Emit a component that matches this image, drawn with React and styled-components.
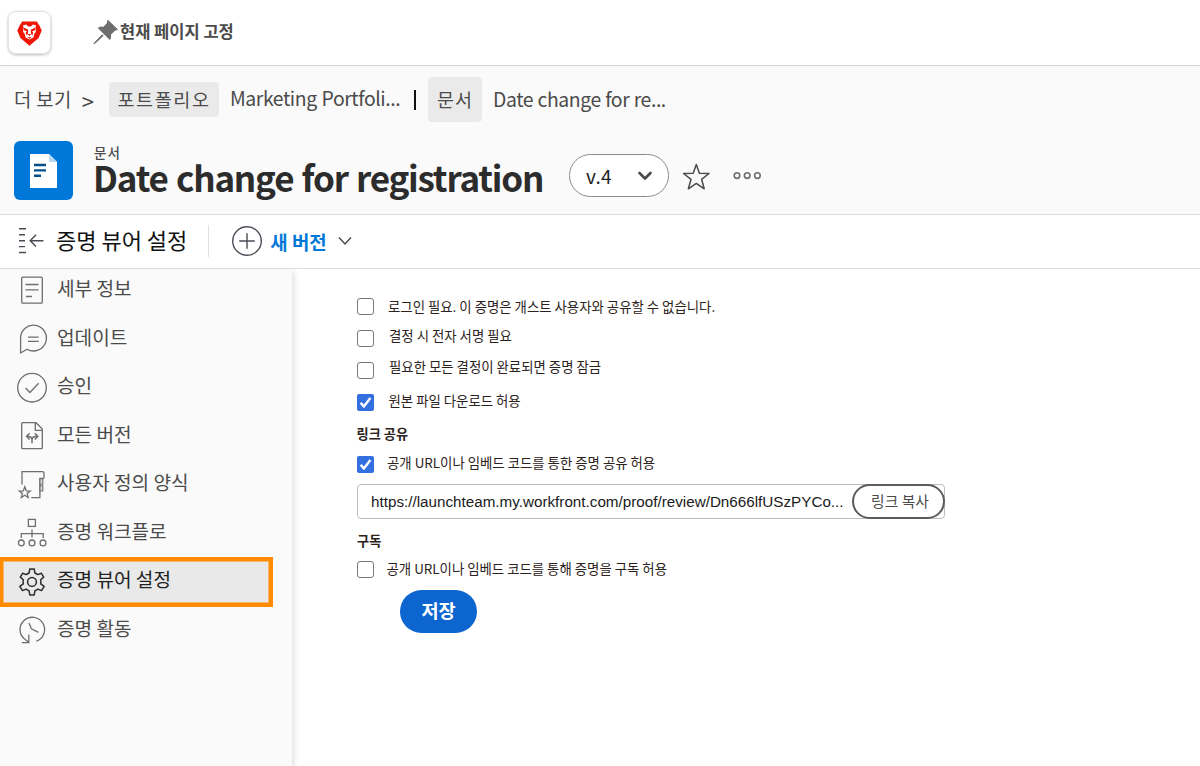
import React from 'react';
import styled, { createGlobalStyle } from 'styled-components';

const Global = createGlobalStyle`
  * { box-sizing: border-box; }
  html, body { margin: 0; padding: 0; }
  body {
    background: #fff;
    font-family: "Noto Sans CJK KR", sans-serif;
    overflow: hidden;
  }
`;

const Page = styled.div`
  width: 1200px;
  height: 766px;
  display: flex;
  flex-direction: column;
  overflow: hidden;
`;

const Text = styled.span`
  display: block;
  white-space: nowrap;
  font-size: ${(p) => p.$size}px;
  font-weight: ${(p) => p.$weight || 400};
  letter-spacing: ${(p) => p.$track || 0}px;
  word-spacing: ${(p) => p.$words || 0}px;
  color: ${(p) => p.$color || '#4b4b4b'};
  line-height: ${(p) => p.$line || 24}px;
  margin-top: ${(p) => p.$top || 0}px;
  margin-left: ${(p) => p.$left || 0}px;
`;

const Icon = styled.svg`
  display: block;
  flex: none;
  fill: none;
  stroke: ${(p) => p.$color || '#6e6e6e'};
  stroke-width: ${(p) => p.$stroke || 1.3};
  margin-left: ${(p) => p.$left || 0}px;
  margin-top: ${(p) => p.$top || 0}px;
`;

const TopBar = styled.header`
  height: 66px;
  flex: none;
  display: flex;
  align-items: center;
  padding-left: 8px;
  border-bottom: 1px solid #d3d3d3;
`;

const LogoTile = styled.div`
  width: 43px;
  height: 43px;
  margin: 0 1px 0 0;
  border-radius: 8px;
  border: 1px solid #e4e4e4;
  box-shadow: 0 1px 3px rgba(0, 0, 0, 0.28);
  display: flex;
  align-items: center;
  justify-content: center;
  padding-top: 1px;
`;

const Head = styled.section`
  height: 149px;
  flex: none;
  background: #fafafa;
  border-bottom: 1px solid #dcdcdc;
`;

const Crumbs = styled.nav`
  display: flex;
  align-items: center;
  height: 67px;
  padding-left: 14px;
`;

const Chip = styled.span`
  display: flex;
  align-items: center;
  justify-content: center;
  width: ${(p) => p.$w}px;
  height: ${(p) => p.$h}px;
  border-radius: 4px;
  background: #eaeaea;
  margin-left: ${(p) => p.$left}px;
`;

const Pipe = styled.span`
  width: 2px;
  height: 20px;
  background: #111;
`;

const Slot = styled.div`
  width: ${(p) => p.$w}px;
  flex: none;
  display: flex;
  align-items: center;
`;

const TitleRow = styled.div`
  display: flex;
  padding: 8px 0 0 14px;
`;

const DocTile = styled.div`
  width: 59px;
  height: 59px;
  border-radius: 6px;
  background: #0078d9;
  display: flex;
  align-items: center;
  justify-content: center;
`;

const TitleBlock = styled.div`
  width: 475px;
  margin-left: 21px;
`;

const VersionSelect = styled.button`
  width: 100px;
  height: 43px;
  margin: 13px 0 0;
  padding: 0 15px 0 16px;
  border: 1px solid #8b8b8b;
  border-radius: 22px;
  background: #fff;
  display: flex;
  align-items: center;
  justify-content: space-between;
  font-family: inherit;
`;

const Toolbar = styled.div`
  height: 54px;
  flex: none;
  display: flex;
  align-items: center;
  border-bottom: 1px solid #dcdcdc;
  padding-left: 18px;
`;

const Divider = styled.span`
  width: 1px;
  height: 32px;
  margin-top: -1px;
  background: #e1e1e1;
`;

const Body = styled.div`
  flex: 1;
  display: flex;
  min-height: 0;
`;

const Sidebar = styled.aside`
  width: 292px;
  flex: none;
  background: #fafafa;
  box-shadow: 2px 3px 6px rgba(40, 60, 80, 0.16);
  clip-path: inset(0 -12px 0 0);
`;

const NavList = styled.ul`
  list-style: none;
  margin: -2.5px 0 0;
  padding: 0;
`;

const NavItem = styled.li`
  display: flex;
  align-items: center;
  height: 48.5px;
  padding-left: 16px;
`;

const ActiveItem = styled(NavItem)`
  height: 49.5px;
  width: 272.5px;
  margin: -0.5px 0;
  padding-left: 13px;
  border: 4px solid #ff8b00;
  border-left-width: 3px;
  background: #e9e9e9;
  box-shadow: inset 0 0 0 1px #f6b768;
`;

const Main = styled.main`
  padding: 21px 0 0 65px;
  display: flex;
  flex-direction: column;
  align-items: flex-start;
`;

const CheckRow = styled.label`
  display: flex;
  align-items: center;
  height: 32px;
  margin-top: ${(p) => p.$top || 0}px;
`;

const Box = styled.span`
  width: 17px;
  height: 17px;
  flex: none;
  border-radius: ${(p) => (p.$on ? 2 : 3)}px;
  border: ${(p) => (p.$on ? '0' : '1px solid #7a7a7a')};
  background: ${(p) => (p.$on ? '#346fe0' : '#fff')};
  display: flex;
  align-items: center;
  justify-content: center;
`;

const UrlField = styled.div`
  width: 588px;
  height: 35px;
  margin-top: 4px;
  border: 1px solid #bdbdbd;
  border-radius: 4px;
  display: flex;
  align-items: center;
  justify-content: space-between;
  padding-left: 13px;
`;

const Url = styled.span`
  font-family: "Liberation Sans", Arial, sans-serif;
  font-size: 15.23px;
  line-height: 20px;
  color: #1a1a1a;
  white-space: nowrap;
`;

const CopyButton = styled.button`
  width: 93px;
  height: 35px;
  flex: none;
  margin: 0 -1px;
  padding: 0 0 0 3px;
  border: 2px solid #5c5c5c;
  border-radius: 18px;
  background: #fff;
  font-family: inherit;
  display: flex;
  align-items: center;
  justify-content: center;
`;

const SaveButton = styled.button`
  width: 77px;
  height: 43px;
  margin: 5px 0 0 43px;
  padding: 0;
  border: 0;
  border-radius: 22px;
  background: #0d66d0;
  font-family: inherit;
  display: flex;
  align-items: center;
  justify-content: center;
`;

const NavIcon = ({ children, color }) => (
  <Icon width="32" height="32" viewBox="0 0 32 32" $color={color}>{children}</Icon>
);

const icons = {
  details: (
    <>
      <rect x="5.7" y="2.2" width="20.6" height="26" rx="1.2" />
      <path d="M9.5 9.5H22.5M9.5 14.8H22.5M10 21.5H16" />
    </>
  ),
  updates: (
    <>
      <path d="M4.6 30V15.2A12.9 12.9 0 1 1 11 26.2Z" strokeLinejoin="round" />
      <path d="M12 14.2H22.7M12 18.3H22.7" />
    </>
  ),
  approvals: (
    <>
      <circle cx="16" cy="15.7" r="14.3" />
      <path d="M9.6 16L13.9 20.5L22.6 11.3" />
    </>
  ),
  versions: (
    <>
      <path d="M20 2.7H6.7Q5.7 2.7 5.7 3.7V27.7Q5.7 28.7 6.7 28.7H25.3Q26.3 28.7 26.3 27.7V9Z" strokeLinejoin="round" />
      <path d="M19.3 3V10.4H26" />
      <path d="M16 23.3V19.8Q16 16.3 11 16.3M16 19.8Q16 16.3 21.3 16.3M13.6 13.2L10.6 16.3L13.6 19.4M18.8 13.2L21.8 16.3L18.8 19.4" strokeWidth="1.5" />
    </>
  ),
  forms: (
    <>
      <path d="M6 15.5V2.7H26.5Q28 2.7 28 4.2V8.6Q28 9.5 26.6 9.5H23.9V28.6H15.3" />
      <path d="M24 9.8H26.8V15.2H24ZM24 16.8H26.8V22H24Z" fill="#dcdcdc" strokeWidth="1.1" />
      <path d="M8.8 17.8L10.3 21.8L14.3 22L11.2 24.6L12.2 28.6L8.8 26.3L5.3 28.6L6.4 24.6L3.3 22L7.3 21.8Z" />
    </>
  ),
  workflow: (
    <>
      <rect x="12.4" y="2.4" width="7" height="7" />
      <path d="M16 12.4V20.6M5.3 21V16.6H27.2V21" />
      <circle cx="5.3" cy="25.9" r="2.9" />
      <circle cx="16" cy="25.9" r="2.9" />
      <circle cx="27" cy="25.9" r="2.9" />
    </>
  ),
  settings: (
    <>
      <path d="M13.8 3.1H18.2L18.9 7A9.5 9.5 0 0 1 21.7 8.6L25.4 7.3L27.7 11.1L24.7 13.7A9.5 9.5 0 0 1 24.7 17.9L28.2 20.3L25.5 24.6L21.9 23.1A9.5 9.5 0 0 1 18.9 24.8L18.2 28.9H13.8L13.1 24.8A9.5 9.5 0 0 1 10.1 23.1L6.5 24.6L3.8 20.3L7.3 17.9A9.5 9.5 0 0 1 7.3 13.7L4.3 11.1L6.6 7.3L10.3 8.6A9.5 9.5 0 0 1 13.1 7Z" strokeLinejoin="round" strokeWidth="1.5" />
      <circle cx="16" cy="15.9" r="4.4" strokeWidth="1.5" />
    </>
  ),
  activity: (
    <path d="M20.3 27.2A12.3 12.3 0 1 0 9.5 25.8L12.5 28M5.8 28.6H12.8V20.5M13 9L15.4 14.7L22.4 18.4" />
  ),
};

const navItems = [
  ['details', '세부 정보'],
  ['updates', '업데이트'],
  ['approvals', '승인'],
  ['versions', '모든 버전'],
  ['forms', '사용자 정의 양식'],
  ['workflow', '증명 워크플로'],
  ['settings', '증명 뷰어 설정'],
  ['activity', '증명 활동'],
];

const Tick = () => (
  <Icon width="13" height="13" viewBox="0 0 13 13" $color="#fff" $stroke={2.4}>
    <path d="M1.6 6.9L4.9 10.4L11.4 2" />
  </Icon>
);

const Check = ({ on, left = 14, dy = 0, top, track, children }) => (
  <CheckRow $top={top}>
    <Box $on={on}>{on && <Tick />}</Box>
    <Text $size={13.4} $color="#2b2220" $left={left} $top={dy} $track={track}>{children}</Text>
  </CheckRow>
);

export default function App() {
  return (
    <Page>
      <Global />
      <TopBar>
        <LogoTile>
          <svg width="25" height="25" viewBox="0 0 25 25">
            <path d="M5.2 0.4H19.8L22.2 4.2L24.7 9.6L21.6 17L12.5 24.8L3.4 17L0.3 9.6L2.8 4.2Z" fill="#f01405" />
            <path d="M5.8 4.4L9 3.6L11.4 5.4H13.6L16 3.6L19.2 4.4L18.4 6.6L18.9 11L17.4 12.6L16.4 16.4L12.5 18.6L8.6 16.4L7.6 12.6L6.1 11L6.6 6.6Z" fill="#fff" />
            <path d="M6.6 6.4L11.2 8.8L11 12.4L9.6 14.4L8.8 11.6L10 10.6L7.2 9.2ZM18.4 6.4L13.8 8.8L14 12.4L15.4 14.4L16.2 11.6L15 10.6L17.8 9.2ZM10.7 13H14.3L12.5 15ZM10.2 16.6L12.5 15.9L14.8 16.6L12.5 17.4Z" fill="#f01405" />
          </svg>
        </LogoTile>
        <Icon width="25" height="25" viewBox="0 0 26 26" $left={41} $top={-1} $stroke={0}>
          <path d="M15.5 0.6L24.9 9.8L22.4 10.6L17.8 15.2C18.6 17.4 18.1 18.9 17.4 19.9L5.9 8.5C7.4 7.3 9.5 7.4 10.8 8L15 3.6Z" fill="#6e6e6e" />
          <path d="M9.5 15.3L10.6 16.5L1.5 24.8L0.9 24.2Z" fill="#6e6e6e" stroke="#6e6e6e" strokeWidth="0.8" />
        </Icon>
        <Text $size={16.5} $weight={700} $top={-3} $left={2}>현재 페이지 고정</Text>
      </TopBar>

      <Head>
        <Crumbs>
          <Slot $w={95}>
            <Text $size={18.8} $top={-2} $track={0.4}>더 보기</Text>
            <Text $size={22} $top={0} $left={10}>&gt;</Text>
          </Slot>
          <Chip $w={110} $h={35} $left={0}>
            <Text $size={18.5} $track={1.6} $top={-2}>포트폴리오</Text>
          </Chip>
          <Slot $w={195}>
            <Text $size={19.4} $left={11} $top={-4} $track={-0.42} $words={1}>Marketing Portfoli...</Text>
          </Slot>
          <Pipe />
          <Chip $w={54} $h={45} $left={12}>
            <Text $size={18.5} $track={1} $top={-1}>문서</Text>
          </Chip>
          <Text $size={19.4} $left={11} $top={-2} $track={-0.42} $words={0.5}>Date change for re...</Text>
        </Crumbs>
        <TitleRow>
          <DocTile>
            <svg width="29" height="36" viewBox="0 0 29 36">
              <path d="M1 1H20L28 9V35H1Z" fill="#fff" />
              <path d="M20 1L28 9H20Z" fill="#b5d8f6" />
              <path d="M5 12H17M5 17.4H17M5 22.8H12" stroke="#054f8d" strokeWidth="2.4" fill="none" />
            </svg>
          </DocTile>
          <TitleBlock>
            <Text $size={13.5} $weight={500} $line={18} $top={2} $track={1}>문서</Text>
            <Text $size={35} $weight={700} $color="#2c2c2c" $line={32} $left={-1} $track={-1.19} $words={1.5}>Date change for registration</Text>
          </TitleBlock>
          <VersionSelect>
            <Text $size={19} $color="#222" $track={0.3}>v.4</Text>
            <Icon width="16" height="10" viewBox="0 0 16 10" $color="#4b4b4b" $stroke={2.6}>
              <path d="M2.5 2L8 7.5L13.5 2" strokeLinecap="round" strokeLinejoin="round" />
            </Icon>
          </VersionSelect>
          <Icon width="28" height="28" viewBox="0 0 28 28" $color="#4b4b4b" $left={13} $top={22} $stroke={1.5}>
            <path d="M14.3 1.4L17.4 10.2L27 10.5L19.6 16.3L22.2 25.8L14.3 20.4L6.4 25.8L9 16.3L1.6 10.5L11.2 10.2Z" strokeLinejoin="round" />
          </Icon>
          <Icon width="28" height="10" viewBox="0 0 28 10" $left={23} $top={30} $stroke={1.6}>
            <circle cx="4" cy="4.6" r="2.8" />
            <circle cx="14.2" cy="4.6" r="2.8" />
            <circle cx="24.4" cy="4.6" r="2.8" />
          </Icon>
        </TitleRow>
      </Head>

      <Toolbar>
        <Icon width="26" height="28" viewBox="0 0 26 28" $color="#4b4b55" $stroke={1.4} $top={-1}>
          <path d="M1 1.8H8M1 7.8H7M1 13.7H7M1 19.6H7M1 25.5H8M12 13.7H25.5M18 7.8L12.2 13.7L18 19.6" />
        </Icon>
        <Slot $w={164}>
          <Text $size={22} $color="#111" $line={30} $top={-5} $left={12}>증명 뷰어 설정</Text>
        </Slot>
        <Divider />
        <Icon width="32" height="32" viewBox="0 0 32 32" $color="#4b4b55" $left={22} $stroke={1.4} $top={-1}>
          <circle cx="16" cy="16" r="14.3" />
          <path d="M16 8.2V23.8M8.2 16H23.8" />
        </Icon>
        <Text $size={18.9} $weight={700} $color="#0078d9" $left={7.3}>새 버전</Text>
        <Icon width="14" height="10" viewBox="0 0 14 10" $color="#4b4b55" $left={11} $top={-2} $stroke={1.5}>
          <path d="M1 1.5L7 8L13 1.5" />
        </Icon>
      </Toolbar>

      <Body>
        <Sidebar>
          <NavList>
            {navItems.map(([key, label]) => {
              const active = key === 'settings';
              const Item = active ? ActiveItem : NavItem;
              return (
                <Item key={key}>
                  <NavIcon color={active ? '#2c2c2c' : undefined}>{icons[key]}</NavIcon>
                  <Text $size={19.1} $left={9} $top={-5} $color={active ? '#222' : '#4b4b4b'}>{label}</Text>
                </Item>
              );
            })}
          </NavList>
        </Sidebar>
        <Main>
          <Check>로그인 필요. 이 증명은 개스트 사용자와 공유할 수 없습니다.</Check>
          <Check left={15} dy={-7}>결정 시 전자 서명 필요</Check>
          <Check left={15} dy={-9}>필요한 모든 결정이 완료되면 증명 잠금</Check>
          <Check on left={14.5} dy={-5}>원본 파일 다운로드 허용</Check>
          <Text $size={13.2} $weight={700} $color="#2b2220" $line={28} $top={2} $left={-0.5}>링크 공유</Text>
          <Check on left={13} dy={-4}>공개 URL이나 임베드 코드를 통한 증명 공유 허용</Check>
          <UrlField>
            <Url>https://launchteam.my.workfront.com/proof/review/Dn666lfUSzPYCo...</Url>
            <CopyButton>
              <Text $size={14.8} $top={-1}>링크 복사</Text>
            </CopyButton>
          </UrlField>
          <Text $size={13.2} $weight={700} $color="#2b2220" $line={28} $top={8}>구독</Text>
          <Check left={12.5} dy={-3} top={-2}>공개 URL이나 임베드 코드를 통해 증명을 구독 허용</Check>
          <SaveButton>
            <Text $size={18.6} $weight={700} $color="#fff" $top={-3}>저장</Text>
          </SaveButton>
        </Main>
      </Body>
    </Page>
  );
}
